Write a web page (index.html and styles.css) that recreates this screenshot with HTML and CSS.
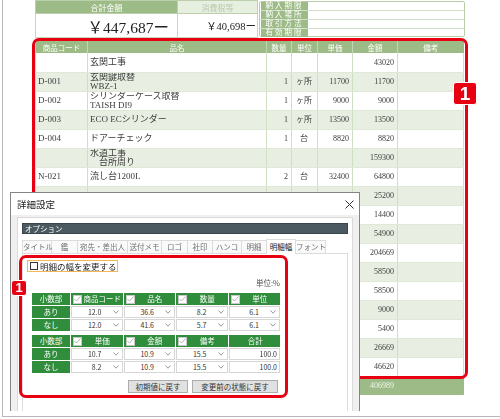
FILE: index.html
```html
<!DOCTYPE html>
<html lang="ja">
<head>
    <meta charset="UTF-8">
    <meta name="viewport" content="width=device-width, initial-scale=1.0">
    <title>見積書 - 詳細設定</title>
    <link rel="stylesheet" href="styles.css">
</head>
<body>
    <div class="screen">
        <div class="doc">
            <div class="summary">
                <table class="totals">
                    <tr>
                        <th>合計金額</th>
                        <th class="tax">消費税等</th>
                    </tr>
                    <tr>
                        <td class="amount-main">￥447,687ー</td>
                        <td class="amount-tax">￥40,698ー</td>
                    </tr>
                </table>
                <div class="terms">
                    <div class="term"><span class="term-label">納入期限</span><span class="term-value"></span></div>
                    <div class="term"><span class="term-label">納入場所</span><span class="term-value"></span></div>
                    <div class="term"><span class="term-label">取引方法</span><span class="term-value"></span></div>
                    <div class="term"><span class="term-label">有効期限</span><span class="term-value"></span></div>
                </div>
            </div>

            <table class="items">
                <colgroup>
                    <col class="c-code">
                    <col class="c-name">
                    <col class="c-qty">
                    <col class="c-unit">
                    <col class="c-price">
                    <col class="c-amount">
                    <col class="c-note">
                </colgroup>
                <thead>
                    <tr><th>商品コード</th><th>品名</th><th>数量</th><th>単位</th><th>単価</th><th>金額</th><th>備考</th></tr>
                </thead>
                <tbody>
                    <tr><td></td><td>玄関工事</td><td class="num"></td><td class="unit"></td><td class="num"></td><td class="num">43020</td><td></td></tr>
                    <tr><td>D-001</td><td>玄関鍵取替<br>WBZ-1</td><td class="num">1</td><td class="unit">ヶ所</td><td class="num">11700</td><td class="num">11700</td><td></td></tr>
                    <tr><td>D-002</td><td>シリンダーケース取替<br>TAISH DI9</td><td class="num">1</td><td class="unit">ヶ所</td><td class="num">9000</td><td class="num">9000</td><td></td></tr>
                    <tr><td>D-003</td><td>ECO ECシリンダー</td><td class="num">1</td><td class="unit">ヶ所</td><td class="num">13500</td><td class="num">13500</td><td></td></tr>
                    <tr><td>D-004</td><td>ドアーチェック</td><td class="num">1</td><td class="unit">台</td><td class="num">8820</td><td class="num">8820</td><td></td></tr>
                    <tr><td></td><td>水道工事<br>　台所周り</td><td class="num"></td><td class="unit"></td><td class="num"></td><td class="num">159300</td><td></td></tr>
                    <tr><td>N-021</td><td>流し台1200L</td><td class="num">2</td><td class="unit">台</td><td class="num">32400</td><td class="num">64800</td><td></td></tr>
                    <tr><td></td><td></td><td class="num"></td><td class="unit"></td><td class="num"></td><td class="num">25200</td><td></td></tr>
                    <tr><td></td><td></td><td class="num"></td><td class="unit"></td><td class="num"></td><td class="num">14400</td><td></td></tr>
                    <tr><td></td><td></td><td class="num"></td><td class="unit"></td><td class="num"></td><td class="num">54900</td><td></td></tr>
                    <tr><td></td><td></td><td class="num"></td><td class="unit"></td><td class="num"></td><td class="num">204669</td><td></td></tr>
                    <tr><td></td><td></td><td class="num"></td><td class="unit"></td><td class="num"></td><td class="num">58500</td><td></td></tr>
                    <tr><td></td><td></td><td class="num"></td><td class="unit"></td><td class="num"></td><td class="num">58500</td><td></td></tr>
                    <tr><td></td><td></td><td class="num"></td><td class="unit"></td><td class="num"></td><td class="num">9000</td><td></td></tr>
                    <tr><td></td><td></td><td class="num"></td><td class="unit"></td><td class="num"></td><td class="num">5400</td><td></td></tr>
                    <tr><td></td><td></td><td class="num"></td><td class="unit"></td><td class="num"></td><td class="num">26669</td><td></td></tr>
                    <tr><td></td><td></td><td class="num"></td><td class="unit"></td><td class="num"></td><td class="num">46620</td><td></td></tr>
                </tbody>
                <tfoot>
                    <tr><td></td><td></td><td></td><td></td><td></td><td class="num">406989</td><td class="last"></td></tr>
                </tfoot>
            </table>
        </div>

        <div class="mark mark-doc"></div>
        <div class="badge badge-doc">1</div>

        <div class="dialog">
            <div class="dialog-title">
                <span>詳細設定</span>
                <svg class="close" width="9" height="9" viewBox="0 0 9 9"><path d="M0.5 0.5L8.5 8.5M8.5 0.5L0.5 8.5" stroke="#333" stroke-width="1"/></svg>
            </div>
            <div class="pane">
                <div class="option-bar">オプション</div>
                <div class="tabs">
                    <span class="tab" style="width:30px">タイトル</span>
                    <span class="tab" style="width:26px">鑑</span>
                    <span class="tab" style="width:50px">宛先・差出人</span>
                    <span class="tab" style="width:34px">送付メモ</span>
                    <span class="tab" style="width:26px">ロゴ</span>
                    <span class="tab" style="width:25px">社印</span>
                    <span class="tab" style="width:29px">ハンコ</span>
                    <span class="tab" style="width:25px">明細</span>
                    <span class="tab active" style="width:30px">明細幅</span>
                    <span class="tab" style="width:30px">フォント</span>
                </div>
                <div class="tab-panel">
                    <label class="chk-row"><span class="chk-box"></span>明細の幅を変更する</label>
                    <div class="widths">
                        <div class="unit-note">単位:%</div>

                        <div class="width-grid">
                            <div class="lbl">小数部</div>
                            <div class="head"><span class="hchk"><svg width="7" height="6" viewBox="0 0 7 6"><path d="M0.5 3L2.5 5L6.5 0.5" fill="none" stroke="#b5b5b5"/></svg></span><span class="htxt">商品コード</span></div>
                            <div class="head"><span class="hchk"><svg width="7" height="6" viewBox="0 0 7 6"><path d="M0.5 3L2.5 5L6.5 0.5" fill="none" stroke="#b5b5b5"/></svg></span><span class="htxt">品名</span></div>
                            <div class="head"><span class="hchk"><svg width="7" height="6" viewBox="0 0 7 6"><path d="M0.5 3L2.5 5L6.5 0.5" fill="none" stroke="#b5b5b5"/></svg></span><span class="htxt">数量</span></div>
                            <div class="head"><span class="hchk"><svg width="7" height="6" viewBox="0 0 7 6"><path d="M0.5 3L2.5 5L6.5 0.5" fill="none" stroke="#b5b5b5"/></svg></span><span class="htxt">単位</span></div>

                            <div class="lbl">あり</div>
                            <div class="val">12.0<svg class="drop" width="6" height="4" viewBox="0 0 6 4"><path d="M0.5 0.5L3 3.2L5.5 0.5" fill="none" stroke="#999"/></svg></div>
                            <div class="val">36.6<svg class="drop" width="6" height="4" viewBox="0 0 6 4"><path d="M0.5 0.5L3 3.2L5.5 0.5" fill="none" stroke="#999"/></svg></div>
                            <div class="val">8.2<svg class="drop" width="6" height="4" viewBox="0 0 6 4"><path d="M0.5 0.5L3 3.2L5.5 0.5" fill="none" stroke="#999"/></svg></div>
                            <div class="val">6.1<svg class="drop" width="6" height="4" viewBox="0 0 6 4"><path d="M0.5 0.5L3 3.2L5.5 0.5" fill="none" stroke="#999"/></svg></div>

                            <div class="lbl">なし</div>
                            <div class="val">12.0<svg class="drop" width="6" height="4" viewBox="0 0 6 4"><path d="M0.5 0.5L3 3.2L5.5 0.5" fill="none" stroke="#999"/></svg></div>
                            <div class="val">41.6<svg class="drop" width="6" height="4" viewBox="0 0 6 4"><path d="M0.5 0.5L3 3.2L5.5 0.5" fill="none" stroke="#999"/></svg></div>
                            <div class="val">5.7<svg class="drop" width="6" height="4" viewBox="0 0 6 4"><path d="M0.5 0.5L3 3.2L5.5 0.5" fill="none" stroke="#999"/></svg></div>
                            <div class="val">6.1<svg class="drop" width="6" height="4" viewBox="0 0 6 4"><path d="M0.5 0.5L3 3.2L5.5 0.5" fill="none" stroke="#999"/></svg></div>
                        </div>

                        <div class="width-grid second">
                            <div class="lbl">小数部</div>
                            <div class="head"><span class="hchk"><svg width="7" height="6" viewBox="0 0 7 6"><path d="M0.5 3L2.5 5L6.5 0.5" fill="none" stroke="#b5b5b5"/></svg></span><span class="htxt">単価</span></div>
                            <div class="head"><span class="hchk"><svg width="7" height="6" viewBox="0 0 7 6"><path d="M0.5 3L2.5 5L6.5 0.5" fill="none" stroke="#b5b5b5"/></svg></span><span class="htxt">金額</span></div>
                            <div class="head"><span class="hchk"><svg width="7" height="6" viewBox="0 0 7 6"><path d="M0.5 3L2.5 5L6.5 0.5" fill="none" stroke="#b5b5b5"/></svg></span><span class="htxt">備考</span></div>
                            <div class="head"><span class="htxt">合計</span></div>

                            <div class="lbl">あり</div>
                            <div class="val">10.7<svg class="drop" width="6" height="4" viewBox="0 0 6 4"><path d="M0.5 0.5L3 3.2L5.5 0.5" fill="none" stroke="#999"/></svg></div>
                            <div class="val">10.9<svg class="drop" width="6" height="4" viewBox="0 0 6 4"><path d="M0.5 0.5L3 3.2L5.5 0.5" fill="none" stroke="#999"/></svg></div>
                            <div class="val">15.5<svg class="drop" width="6" height="4" viewBox="0 0 6 4"><path d="M0.5 0.5L3 3.2L5.5 0.5" fill="none" stroke="#999"/></svg></div>
                            <div class="val total">100.0</div>

                            <div class="lbl">なし</div>
                            <div class="val">8.2<svg class="drop" width="6" height="4" viewBox="0 0 6 4"><path d="M0.5 0.5L3 3.2L5.5 0.5" fill="none" stroke="#999"/></svg></div>
                            <div class="val">10.9<svg class="drop" width="6" height="4" viewBox="0 0 6 4"><path d="M0.5 0.5L3 3.2L5.5 0.5" fill="none" stroke="#999"/></svg></div>
                            <div class="val">15.5<svg class="drop" width="6" height="4" viewBox="0 0 6 4"><path d="M0.5 0.5L3 3.2L5.5 0.5" fill="none" stroke="#999"/></svg></div>
                            <div class="val total">100.0</div>
                        </div>

                        <div class="actions">
                            <button class="btn btn-reset">初期値に戻す</button>
                            <button class="btn btn-revert">変更前の状態に戻す</button>
                        </div>
                    </div>
                </div>
            </div>
        </div>

        <div class="mark mark-dialog"></div>
        <div class="badge badge-dialog">1</div>
    </div>
</body>
</html>
```

FILE: styles.css
```css
* {
    margin: 0;
    padding: 0;
    box-sizing: border-box;
}

body {
    width: 500px;
    height: 419px;
    overflow: hidden;
    background: #fff;
    font-family: "Liberation Serif", "Noto Sans CJK JP", serif;
    color: #3a3a3a;
}

.screen {
    position: relative;
    width: 498px;
    height: 417px;
    margin-left: 2px;
    border-left: 1px solid #b9b9b9;
    border-bottom: 1px solid #b9b9b9;
    overflow: hidden;
}

/* 見積書 */
.doc {
    margin-left: 32px;
    width: 432px;
    will-change: transform;
}

.summary {
    display: flex;
    height: 37px;
}

.totals {
    width: 223px;
    border-collapse: collapse;
    table-layout: fixed;
}

.totals th {
    height: 13px;
    font-size: 8px;
    font-weight: normal;
    color: #fff;
    background: #9dbb86;
    border: 1px solid #bcd0ad;
}

.totals th.tax {
    width: 80px;
    background: #e7efe1;
    color: #b9caac;
}

.totals td {
    height: 24px;
    border: 1px solid #c8d8bc;
    text-align: right;
    white-space: nowrap;
    color: #222;
}

.amount-main {
    font-size: 15.5px;
    padding-right: 8px;
}

.amount-tax {
    font-size: 10.5px;
    padding-right: 1px;
}

.terms {
    margin: 1px 0 0 1px;
    width: 206px;
    height: 36px;
    border: 1px solid #b8cea8;
    border-radius: 2px;
    display: flex;
    flex-direction: column;
}

.term {
    flex: 1;
    display: flex;
    border-top: 1px solid #d3e0c9;
}

.term:first-child {
    border-top: 0;
}

.term-label {
    width: 47px;
    margin: 0 1px;
    background: #9dbb86;
    color: #fff;
    font-size: 7.5px;
    letter-spacing: 2px;
    text-align: center;
    line-height: 8px;
}

.term-value {
    flex: 1;
}

.items {
    margin-top: 4px;
    width: 428px;
    border-collapse: collapse;
    table-layout: fixed;
    font-size: 9px;
    color: #3c3c3c;
}

.c-code { width: 52px; }
.c-name { width: 179px; }
.c-qty { width: 25px; }
.c-unit { width: 26px; }
.c-price { width: 35px; }
.c-amount { width: 45px; }
.c-note { width: 66px; }

.items th {
    height: 12px;
    background: #9dbb86;
    color: #fff;
    font-weight: normal;
    font-size: 7.5px;
    border-left: 1px solid #c4d7b5;
}

.items td {
    height: 19px;
    padding: 0 3px 0 2px;
    line-height: 9px;
    color: #3c3c3c;
    border-left: 1px solid #cfdfc3;
    border-right: 1px solid #cfdfc3;
    border-bottom: 1px solid #dfe9d8;
    white-space: nowrap;
    overflow: hidden;
}

.items tbody tr:nth-child(even) td {
    background: #e8efe2;
}

.items td.num {
    text-align: right;
    font-size: 8px;
    color: #3c3c3c;
}

.items td.unit {
    text-align: center;
    font-size: 8px;
}

.items tfoot td {
    background: #9dbb86;
    color: #eef4ea;
    border-color: #9dbb86;
    border-bottom: 0;
}

.items tfoot td.num {
    color: #eef4ea;
}

.items tfoot td.last {
    border-left: 1px solid #fff;
    border-bottom-right-radius: 3px;
}

/* 注釈 */
.mark {
    position: absolute;
    border: 3px solid #e60012;
    border-radius: 7px;
}

.mark-doc {
    left: 29px;
    top: 38px;
    width: 436px;
    height: 341px;
}

.mark-dialog {
    left: 16px;
    top: 255px;
    width: 269px;
    height: 143px;
}

.badge {
    position: absolute;
    background: #e60012;
    color: #fff;
    font-family: "Liberation Sans", Arial, sans-serif;
    font-weight: bold;
    text-align: center;
    border: 1px solid #fff;
    border-radius: 3px;
}

.badge-doc {
    left: 450px;
    top: 82px;
    width: 24px;
    height: 23px;
    font-size: 19px;
    line-height: 21px;
}

.badge-dialog {
    left: 8px;
    top: 280px;
    width: 16px;
    height: 16px;
    font-size: 13px;
    line-height: 14px;
}

/* 詳細設定ダイアログ */
.dialog {
    position: absolute;
    left: 7px;
    top: 192px;
    width: 350px;
    height: 219px;
    background: #f0f0f0;
    border: 1px solid #858585;
    border-bottom: 0;
    font-family: "Noto Sans CJK JP", sans-serif;
    color: #222;
    overflow: hidden;
}

.dialog-title {
    height: 22px;
    background: #fff;
    display: flex;
    align-items: center;
    justify-content: space-between;
    padding: 0 5px 0 6px;
    font-size: 9.5px;
}

.pane {
    margin: 2px 6px 0 6px;
    height: 200px;
    background: #fff;
    border: 1px solid #dadada;
    padding: 5px 4px 0 4px;
}

.option-bar {
    height: 11px;
    background: #4b5a61;
    border: 1px solid #3a464b;
    color: #fff;
    font-size: 7.5px;
    line-height: 9px;
    padding-left: 2px;
}

.tabs {
    display: flex;
    align-items: flex-end;
    height: 13px;
    margin-top: 6px;
}

.tab {
    height: 13px;
    border: 1px solid #dcdcdc;
    border-bottom: 0;
    border-left: 0;
    background: #fafafa;
    color: #707070;
    font-size: 7.5px;
    line-height: 12px;
    text-align: center;
    white-space: nowrap;
}

.tab:first-child {
    border-left: 1px solid #dcdcdc;
}

.tab.active {
    height: 15px;
    background: #fff;
    color: #111;
    border-left: 1px solid #dcdcdc;
    margin-left: -1px;
    line-height: 14px;
    position: relative;
    top: 1px;
}

.tab-panel {
    height: 160px;
    border: 1px solid #dcdcdc;
}

.chk-row {
    display: flex;
    align-items: center;
    width: 91px;
    height: 12px;
    margin: 6px 0 0 4px;
    padding-left: 2px;
    border: 1px solid #f1b955;
    font-size: 8.5px;
    color: #222;
    white-space: nowrap;
}

.chk-box {
    width: 8px;
    height: 8px;
    border: 1px solid #333;
    background: #fff;
    margin-right: 2px;
}

.widths {
    width: 248px;
    margin-left: 9px;
}

.unit-note {
    margin-top: 6px;
    height: 10px;
    text-align: right;
    font-size: 7.5px;
    line-height: 10px;
    color: #555;
}

.width-grid {
    display: grid;
    grid-template-columns: 38px repeat(4, 1fr);
    grid-auto-rows: 12px;
    gap: 1px;
    margin-top: 5px;
}

.width-grid.second {
    margin-top: 4px;
}

.lbl {
    background: #2f8d3c;
    color: #fff;
    font-size: 7.5px;
    line-height: 12px;
    text-align: center;
}

.head {
    display: flex;
    align-items: center;
    background: #2f8d3c;
    color: #fff;
    font-size: 7.5px;
    line-height: 12px;
    padding-left: 2px;
}

.hchk {
    width: 9px;
    height: 9px;
    background: #fff;
    border: 1px solid #c8c8c8;
    display: flex;
    align-items: center;
    justify-content: center;
}

.htxt {
    flex: 1;
    text-align: center;
    white-space: nowrap;
}

.val {
    display: flex;
    align-items: center;
    justify-content: flex-end;
    border: 1px solid #d6d6d6;
    background: #fff;
    font-size: 7px;
    line-height: 10px;
    color: #333;
    padding-right: 3px;
}

.val.total {
    padding-right: 2px;
}

.drop {
    margin-left: 11px;
}

.actions {
    display: flex;
    justify-content: flex-end;
    gap: 4px;
    margin-top: 7px;
    padding-right: 2px;
}

.btn {
    height: 13px;
    background: #e1e1e1;
    border: 1px solid #adadad;
    font-family: "Noto Sans CJK JP", sans-serif;
    font-size: 7.5px;
    line-height: 11px;
    color: #333;
}

.btn-reset {
    width: 60px;
}

.btn-revert {
    width: 86px;
}
```
